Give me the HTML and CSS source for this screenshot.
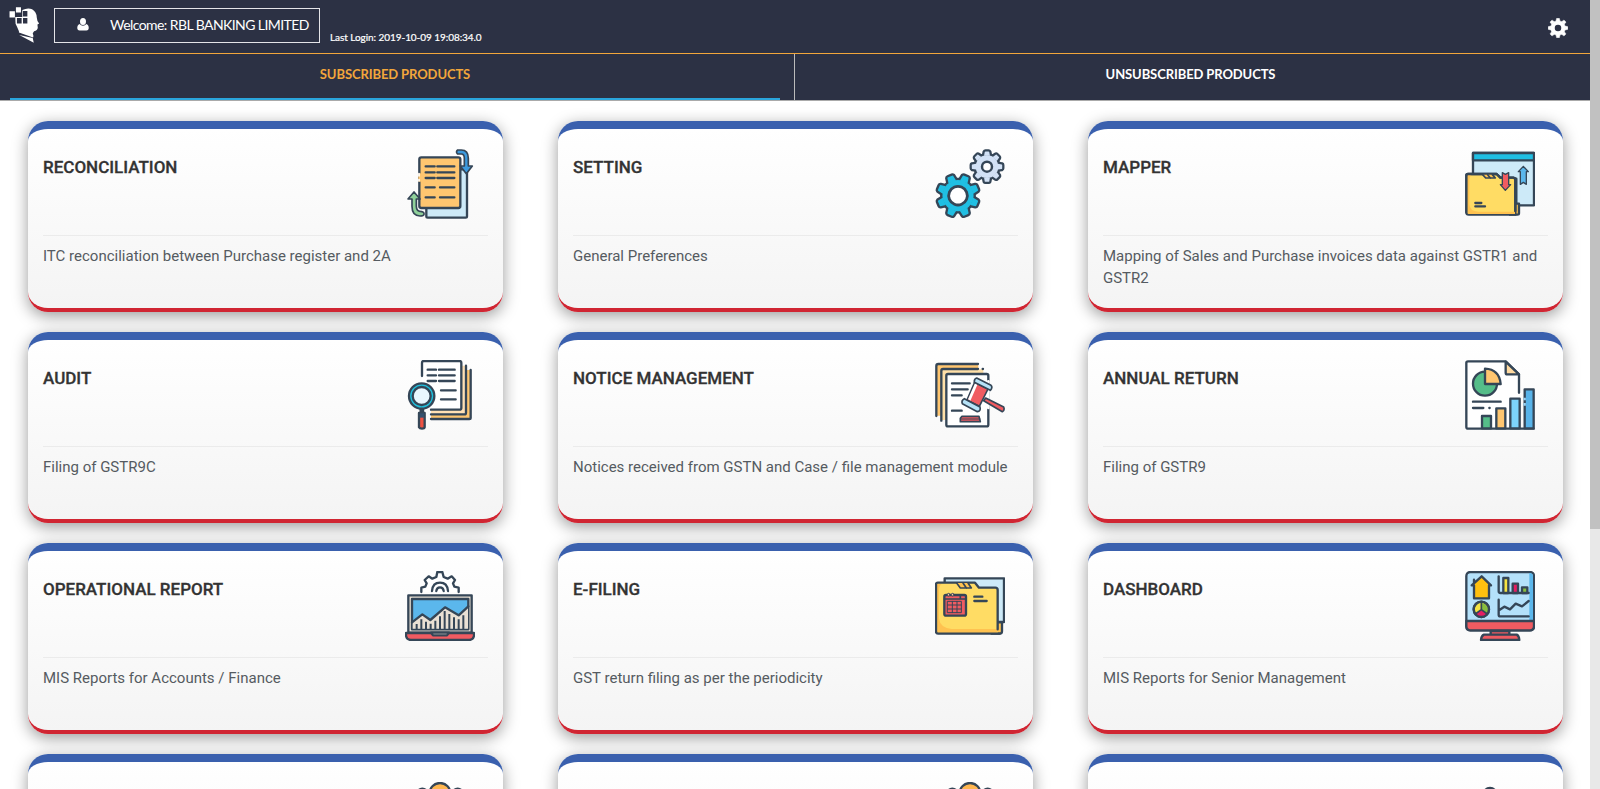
FILE: index.html
```
<!DOCTYPE html>
<html lang="en">
<head>
<meta charset="utf-8">
<title>Products</title>
<link rel="stylesheet" href="styles.css">
</head>
<body>
<svg class="defs" width="0" height="0">
  <defs>
    <g id="teeth">
      <path id="tooth" d="M-13-48 -10-65Q-9-67-7-67H7Q9-67 10-65L13-48z"/>
      <use href="#tooth" transform="rotate(45)"/><use href="#tooth" transform="rotate(90)"/><use href="#tooth" transform="rotate(135)"/><use href="#tooth" transform="rotate(180)"/><use href="#tooth" transform="rotate(225)"/><use href="#tooth" transform="rotate(270)"/><use href="#tooth" transform="rotate(315)"/>
      <circle r="50"/>
    </g>
    <g id="person">
      <circle cx="105" cy="34" r="31" fill="#ffb64f"/><circle cx="52" cy="36" r="16" fill="#ffb64f"/><circle cx="158" cy="36" r="16" fill="#ffb64f"/>
    </g>
  </defs>
</svg>
<div class="app">
  <div class="page">
    <header class="topbar">
      <svg class="logo" viewBox="28 20 91 107">
        <path fill="#fff" d="M67 29Q84 21 96 27Q109 34 110 51Q110 60 117 69L112 72 113 82Q112 91 102 92L98 98Q101 105 99 111L57 96V92Q52 80 47 70L46 50H67zM58 103 98 112 101 126z"/>
        <path fill="#fff" d="M29 33H45V51H29zM48 21H63V36H48z"/>
        <path fill="#2c3144" d="M51 39H65V48H51zM69 32H82V48H69zM51 53H65V69H51zM69 53H82V69H69z"/>
      </svg>
      <div class="welcome">
        <svg class="user" viewBox="0 0 12 13"><path fill="#fff" d="M6 0Q9 0 9 3.500T6 7 3 3.500 6 0zM2.500 6Q4 7.800 6 7.800T9.500 6Q12 7 11.700 10.500 11.500 12.500 9.500 12.500H2.500Q.5 12.500.3 10.500 0 7 2.500 6z"/></svg>
        <span>Welcome: RBL BANKING LIMITED</span>
      </div>
      <span class="login">Last Login: 2019-10-09 19:08:34.0</span>
      <svg class="cog" viewBox="-68 -68 136 136"><use href="#teeth" fill="#fff" stroke="#fff" stroke-width="3"/><circle r="22" fill="#2c3144"/></svg>
    </header>
    <nav class="tabs">
      <div class="tab tab-active"><span>SUBSCRIBED PRODUCTS</span></div>
      <div class="tab"><span>UNSUBSCRIBED PRODUCTS</span></div>
    </nav>
    <main class="cards">
      <section class="card">
        <div class="head"><h2>RECONCILIATION</h2>
          <svg class="icon" viewBox="45 117 210 210">
            <rect x="109" y="178" width="122" height="145" rx="4" fill="#cdeaf8"/>
            <rect x="88" y="142" width="123" height="152" rx="6" fill="#ffc670"/>
            <path stroke="#ffc670" stroke-width="8" stroke-linecap="butt" d="M89 190V215"/><path stroke="#fff" stroke-width="5" d="M87 191V198M87 209V213"/>
            <path d="M107 169H134M142 169H193M107 187H134M142 187H193M107 204H134M142 204H193M107 232H134M150 232H193M107 262H134M150 262H193"/>
            <path fill="#3c9ade" stroke-width="5" d="M203 120H214Q235 120 235 145V168H247L229 191 211 168H223V145Q223 132 214 132H203Q196 126 203 120z"/>
            <path fill="#8fd19a" stroke-width="5" d="M72 246 90 267H79V289Q79 305 95 305Q103 306 102 313 101 318 90 318 66 318 66 289V267H54z"/>
          </svg></div>
        <p>ITC reconciliation between Purchase register and 2A</p>
      </section>
      <section class="card">
        <div class="head"><h2>SETTING</h2>
          <svg class="icon" viewBox="45 42 210 210">
            <g transform="translate(201 95) scale(.68)"><use href="#teeth" stroke-width="20"/><use href="#teeth" fill="#d2e1f5" stroke="none"/><circle r="22" fill="#fff" stroke-width="11"/></g>
            <g transform="translate(114 182) rotate(22.500) scale(.93)"><use href="#teeth" stroke-width="15"/><use href="#teeth" fill="#20bfe3" stroke="none"/><circle r="30" fill="#fff" stroke-width="9"/></g>
          </svg></div>
        <p>General Preferences</p>
      </section>
      <section class="card">
        <div class="head"><h2>MAPPER</h2>
          <svg class="icon" viewBox="75 42 210 210">
            <path fill="#cdeaf8" d="M99 54H282V211H99z"/><path fill="#20bfe3" d="M99 54H282V76H99z"/>
            <path fill="#ffc250" d="M210 131H229V206H237V235Q237 239 232 239H210z"/>
            <path fill="#ffdc64" d="M84 117H170L181 128H220Q226 129 226 135V239H86Q79 239 79 232V122Q79 117 84 117z"/>
            <path fill="#ffc250" stroke="none" d="M82 120H95Q88 124 88 138V208Q89 229 115 230H225V237H86Q82 237 82 232z"/>
            <path d="M79 232V122Q79 117 84 117H170L181 128H220Q226 129 226 135V228" fill="none"/><path fill="#ffc250" stroke-width="5" d="M128 119 137 129H166L157 119M143 119 151 129"/>
            <path d="M106 204H124M106 214H135"/>
            <path fill="#f05b61" stroke-width="4" d="M187 113 196 118 206 113V149H212L196 166 181 149H187z"/><path fill="#5bb7ec" stroke-width="4" d="M250 94 265 110H259V148L250 142 241 148V110H235z"/>
          </svg></div>
        <p>Mapping of Sales and Purchase invoices data against GSTR1 and GSTR2</p>
      </section>
      <section class="card">
        <div class="head"><h2>AUDIT</h2>
          <svg class="icon" viewBox="45 45 210 210">
            <path fill="#ffc670" stroke="none" d="M215 75H242V222H123V192H215z"/><path fill="#ffe0b5" stroke="none" d="M215 62H228V207H123V192H215z"/>
            <path fill="none" d="M242 75V218Q242 222 238 222H123M228 62V203Q228 208 223 208H123"/>
            <path fill="#fff" stroke="none" d="M96 48H214V193H125L96 130z"/><path fill="none" d="M96 93V53Q96 48 101 48H209Q214 48 214 53V189Q214 194 209 194H123"/>
            <path d="M113 74H138M147 74H194M113 91H138M147 91H194M113 108H138M147 108H194M153 136H197M153 163H197"/>
            <path fill="#52657a" d="M92 193H99V204H92z"/><path fill="#ef5243" d="M87 204H104V247Q103 251 96 251T87 247z"/><path fill="#33506e" stroke="none" d="M89 205H102V218H89z"/>
            <circle cx="95" cy="153" r="38" fill="#20bfdc"/><circle cx="95" cy="153" r="27" fill="#e9f7ff"/>
          </svg></div>
        <p>Filing of GSTR9C</p>
      </section>
      <section class="card">
        <div class="head"><h2>NOTICE MANAGEMENT</h2>
          <svg class="icon" viewBox="45 45 210 210">
            <path fill="#ffc670" stroke="none" d="M48 57H175V73H64V212H48z"/><path fill="#ffe0a8" stroke="none" d="M63 73H190V90H79V225H63z"/>
            <path fill="none" d="M49 213V63Q49 57 55 57H174M64 227V78Q64 72 69 72H174M188 72h1"/>
            <rect x="79" y="87" width="126" height="157" rx="5" fill="#fff"/><path stroke="#fff" stroke-width="8" d="M205 109V189"/>
            <path d="M96 115H149M96 133H143M96 151H125M96 197H125"/>
            <path fill="#f05b61" stroke-width="5" d="M197 159 251 186Q255 196 247 200L191 167z"/>
            <path fill="#f05b61" stroke-width="5" d="M164 112 204 132 178 184 141 165z"/><path fill="#fff" stroke="none" d="M165 115 172 119 151 167 144 163z"/>
            <path fill="#b7e3f8" stroke-width="5" d="M170 99 213 121Q219 127 211 136L163 112Q162 101 170 99zM133 161 180 186Q183 199 172 200L127 176Q123 166 133 161z"/>
            <path fill="#f05b61" stroke-width="5" d="M126 214H177L181 230H121L121 220z"/><path stroke-width="3" d="M122 222H180"/>
          </svg></div>
        <p>Notices received from GSTN and Case / file management module</p>
      </section>
      <section class="card">
        <div class="head"><h2>ANNUAL RETURN</h2>
          <svg class="icon" viewBox="75 45 210 210">
            <path fill="#fff" stroke="none" d="M79 48H197L237 88V251H79z"/><path fill="none" stroke-width="7" d="M237 143V88L197 49H84Q79 49 79 53V246Q79 251 84 251H281"/>
            <path fill="#ffdaa0" d="M197 50V83Q197 88 202 88H237z"/>
            <circle cx="135" cy="116" r="36" fill="#55bd89"/><path fill="#ffc670" d="M135 71Q178 73 182 117H135z"/>
            <path d="M99 170H182M99 189H130M148 189h1"/>
            <path fill="#55bd89" stroke-width="7" d="M126 213H153V250H126z"/><path fill="#ffc670" stroke-width="7" d="M169 190H196V250H169z"/><path fill="#7dd3fa" stroke-width="7" d="M211 161H239V250H211z"/><path fill="#58b3e9" stroke-width="7" d="M254 133H281V250H254z"/>
            <path stroke="#9bd3f4" stroke-width="7" stroke-linecap="butt" d="M254 158V166M254 174V182"/>
          </svg></div>
        <p>Filing of GSTR9</p>
      </section>
      <section class="card">
        <div class="head"><h2>OPERATIONAL REPORT</h2>
          <svg class="icon" viewBox="45 48 210 210">
            <path fill="#fff" d="M94 111V98L106 95 110 85 104 75 116 64 127 71 139 66 142 51H157L161 66 173 71 185 64 195 75 189 85 193 95 206 98V111"/>
            <path fill="none" d="M126 108Q128 83 150 83T174 108M139 108Q140 97 150 97T161 108"/>
            <path fill="#e9e0d4" d="M55 121H245V233H55z"/><path fill="#5bb7ec" d="M66 132H235V223H66z"/>
            <path fill="#e9e0d4" stroke="none" d="M68 203 97 178 121 195 165 157 206 181 234 155V221H68z"/><path fill="none" d="M66 202 97 178 121 195 165 157 206 181 235 154"/>
            <path stroke-width="6" stroke-linecap="butt" d="M80 207V222M94 193V222M108 200V222M122 206V222M136 197V222M150 184V222M164 168V222M178 177V222M192 187V222M206 193V222M220 181V222"/>
            <path fill="#f05b61" d="M48 234H252V242Q250 254 238 255H62Q50 254 48 242z"/><path fill="#e9e0d4" d="M123 233H177L171 241H129z"/>
          </svg></div>
        <p>MIS Reports for Accounts / Finance</p>
      </section>
      <section class="card">
        <div class="head"><h2>E-FILING</h2>
          <svg class="icon" viewBox="45 48 210 210">
            <path fill="#cdeaf8" d="M74 70H252V201H74z"/><path fill="#ffc250" d="M215 202H246V229Q246 236 239 236H215z"/>
            <path fill="#ffdc64" stroke="none" d="M53 83H165L177 98H226Q233 98 233 105V236H54Q48 236 48 229V88Q48 83 53 83z"/>
            <path fill="#ffc250" stroke="none" d="M51 87H65Q57 92 57 107V190Q60 219 95 222H232V234H55Q50 234 50 229z"/>
            <path fill="none" d="M239 236H54Q48 236 48 229V88Q48 83 53 83H165L177 98H226Q233 98 233 105V223"/><path fill="#ffc250" stroke-width="5" d="M110 84 121 99H154L144 84M129 84 139 99"/>
            <rect x="73" y="120" width="65" height="62" rx="5" fill="#f05b61"/><path stroke-width="5" d="M73 132H138M121 120V130"/>
            <g fill="#ffc9a0" stroke-width="3"><circle cx="86" cy="119" r="4"/><circle cx="98" cy="119" r="4"/></g>
            <path fill="none" stroke-width="3" d="M83 139H124V173H83zM83 150H124M83 162H124M97 139V173M111 139V173"/><path d="M163 125H187M163 138H200"/>
          </svg></div>
        <p>GST return filing as per the periodicity</p>
      </section>
      <section class="card">
        <div class="head"><h2>DASHBOARD</h2>
          <svg class="icon" viewBox="75 48 210 210">
            <rect x="79" y="51" width="203" height="175" rx="12" fill="#b4e1fa"/><path fill="#5bb7ec" stroke="none" d="M268 54Q279 54 279 64V197H268z"/>
            <path fill="#f05b61" d="M79 198H282V214Q282 226 270 226H91Q79 226 79 214z"/><path fill="#f05b61" d="M152 228H208V239H152zM132 239H230Q237 242 238 255H123Q124 242 132 239z"/>
            <path fill="#ffc00f" d="M95 91 125 64 153 91H147V130H102V91zM102 74V83"/>
            <circle cx="124" cy="163" r="23" fill="#f5e342"/><path fill="#e51e63" stroke="none" d="M124 164 106 177Q122 192 142 177z"/><path fill="#87bd3e" stroke="none" d="M124 164V143Q149 149 143 176z"/><path fill="none" stroke-width="5" d="M124 141V164L106 177M124 164 142 177"/><circle cx="124" cy="163" r="23" fill="none"/>
            <path fill="none" d="M176 64V109Q176 114 181 114H266M176 134V179Q176 184 181 184H266M177 166 193 155 210 163 227 146 246 154 266 138"/>
            <path fill="#f5e342" d="M190 69H205V114H190z"/><path fill="#e51e63" d="M218 86H234V114H218z"/><path fill="#87bd3e" d="M246 97H262V114H246z"/>
          </svg></div>
        <p>MIS Reports for Senior Management</p>
      </section>
      <section class="card"><div class="head"><h2></h2><svg class="icon" viewBox="0 0 210 210"><use href="#person"/></svg></div></section>
      <section class="card"><div class="head"><h2></h2><svg class="icon" viewBox="0 0 210 210"><use href="#person"/></svg></div></section>
      <section class="card"><div class="head"><h2></h2><svg class="icon" viewBox="0 0 210 210"><circle cx="75" cy="38" r="20" fill="#ffb64f"/></svg></div></section>
    </main>
  </div>
  <div class="scrollbar"><div class="thumb"></div></div>
</div>
</body>
</html>
```
FILE: styles.css
```
* { box-sizing: border-box; }
body { margin: 0; background: #fff; font-family: Roboto, sans-serif; overflow: hidden; }
.defs { display: block; height: 0; }
.app { display: flex; height: 789px; overflow: hidden; }
.page { width: 1590px; height: 789px; overflow: hidden; }
.scrollbar { width: 10px; background: #e8e8e8; }
.thumb { height: 529px; background: #c1c1c1; }

.topbar { display: flex; align-items: flex-start; height: 54px; padding-left: 9px; background: #2c3144; border-bottom: 1px solid #f2a63b; color: #fff; font-family: Lato, sans-serif; }
.logo { width: 31px; height: 36px; margin-top: 7px; }
.welcome { display: flex; align-items: center; width: 266px; height: 35px; margin: 8px 0 0 14px; padding: 0 0 2px 22px; border: 1px solid #e4e4e8; font-size: 14px; letter-spacing: -.57px; white-space: nowrap; }
.user { flex: none; width: 12px; height: 13px; margin-right: 21px; }
.login { margin: 30px 0 0 10px; font-size: 10px; line-height: 14px; letter-spacing: -.06px; white-space: nowrap; -webkit-text-stroke: .2px #fff; }
.cog { width: 20px; height: 20px; margin: 18px 22px 0 auto; }

.tabs { display: flex; height: 47px; background: #2c3144; border-bottom: 1px solid #aaa; font: bold 13px/40px Lato, sans-serif; letter-spacing: -.1px; color: #fff; text-align: center; }
.tab { width: 795px; padding: 0 14px 0 10px; }
.tab-active { border-right: 1px solid #bbb; color: #f2a63b; }
.tab span { display: block; height: 46px; }
.tab-active span { border-bottom: 2px solid #2aa5dc; }

.cards { display: grid; grid-template-columns: repeat(3, 475px); grid-auto-rows: 191px; gap: 20px 55px; padding: 20px 0 0 28px; }
.card { padding: 0 15px; border-top: 8px solid #3a60ae; border-bottom: 4px solid #d02532; border-radius: 20px; background: linear-gradient(#fff, #f4f4f4); box-shadow: 0 4px 16px rgba(0, 0, 0, .4); }
.head { display: flex; justify-content: space-between; height: 107px; padding: 20px 13px 0 0; border-bottom: 1px solid #ebebeb; }
.card h2 { margin: 8px 0 0; font-size: 17px; line-height: 20px; font-weight: 500; color: #333; -webkit-text-stroke: .3px #333; }
.card p { margin: 9px 0 0; font-size: 15px; line-height: 22px; color: #555b61; }
.icon { flex: none; width: 70px; height: 70px; stroke: #354657; stroke-width: 7; stroke-linecap: round; stroke-linejoin: round; }
```
